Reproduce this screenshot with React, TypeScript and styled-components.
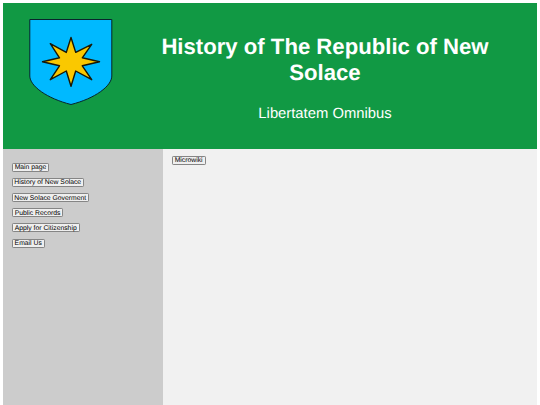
import React from "react";
import styled, { createGlobalStyle } from "styled-components";

const GlobalStyle = createGlobalStyle`
  * { box-sizing: border-box; }
  body {
    margin: 0;
    background: #fff;
    font-family: "Liberation Sans", Arial, sans-serif;
    text-rendering: geometricPrecision;
    overflow: hidden;
  }
`;

const Page = styled.div`
  height: 405px;
  padding: 3.33px 3.33px 0;
  display: flex;
  flex-direction: column;
`;

const Header = styled.header`
  flex: none;
  height: 145.2px;
  display: flex;
  background: #119944;
  color: #fff;
`;

const Emblem = styled.svg`
  flex: none;
  width: 90px;
  height: 95px;
  margin: 11.67px 0 0 22.67px;
`;

const Heading = styled.div`
  flex: none;
  width: 350px;
  margin-left: 34px;
  padding-top: 31px;
  text-align: center;
`;

const Title = styled.h1`
  margin: 0;
  font-size: 22.15px;
  line-height: 26px;
  font-weight: 700;
`;

const Motto = styled.p`
  margin: 18.6px 0 0;
  font-size: 14.8px;
  line-height: 18px;
`;

const Columns = styled.div`
  flex: 1;
  display: flex;
`;

const Sidebar = styled.nav`
  flex: none;
  width: 160px;
  padding: 14.2px 8.4px;
  display: flex;
  flex-direction: column;
  align-items: flex-start;
  gap: 6.2px;
  background: #ccc;
`;

const Content = styled.main`
  flex: 1;
  padding: 7.4px 8.2px;
  display: flex;
  align-items: flex-start;
  background: #f1f1f1;
`;

const LinkButton = styled.button<{ $width: number }>`
  width: ${(p) => p.$width}px;
  height: 9px;
  padding: 1px 0 0;
  border: 1px solid #858585;
  border-radius: 1.2px;
  background: #efefef;
  color: #000;
  font: 6.8px/7px "Liberation Sans", Arial, sans-serif;
  text-rendering: geometricPrecision;
  white-space: nowrap;
  display: flex;
  align-items: center;
  justify-content: center;
`;

const links = [
  { label: "Main page", width: 37.6 },
  { label: "History of New Solace", width: 72 },
  { label: "New Solace Goverment", width: 77 },
  { label: "Public Records", width: 51.6 },
  { label: "Apply for Citizenship", width: 68 },
  { label: "Email Us", width: 33 },
];

export default function App() {
  return (
    <Page>
      <GlobalStyle />
      <Header>
        <Emblem viewBox="26 15 90 95" role="img" aria-label="Coat of arms of New Solace">
          <path
            d="M29.8 19.5H111.8V76C111.8 86 95 98.5 71 104.5C47 98.5 29.8 86 29.8 76Z"
            fill="#00b9ff"
            stroke="#08252c"
            strokeWidth="1"
          />
          <path
            d="M71 37.5L75.7 52.4L91.7 44.3L82.3 57.8L99.5 61.8L82.3 65.8L91.7 79.7L75.7 71L71 86.3L66.3 71L50.3 79.7L59.5 65.8L42.5 61.8L59.5 57.8L50.3 43.7L66.3 52.4Z"
            fill="#fac800"
            stroke="#191806"
            strokeWidth="1.4"
            strokeLinejoin="round"
          />
        </Emblem>
        <Heading>
          <Title>History of The Republic of New Solace</Title>
          <Motto>Libertatem Omnibus</Motto>
        </Heading>
      </Header>
      <Columns>
        <Sidebar>
          {links.map((link) => (
            <LinkButton key={link.label} $width={link.width}>{link.label}</LinkButton>
          ))}
        </Sidebar>
        <Content>
          <LinkButton $width={34.2}>Microwiki</LinkButton>
        </Content>
      </Columns>
    </Page>
  );
}
